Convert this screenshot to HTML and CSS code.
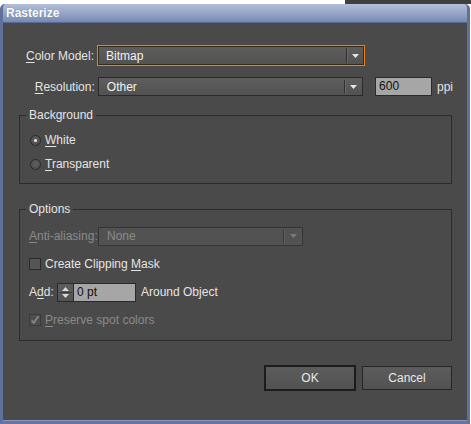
FILE: index.html
```html
<!DOCTYPE html>
<html>
<head>
<meta charset="utf-8">
<link rel="stylesheet" href="styles.css">
</head>
<body>
<div class="strip"><div class="strip-light"></div><div class="strip-dark"></div></div>
<div class="window">
  <div class="titlebar">Rasterize</div>
  <div class="content">
    <div class="row row-color">
      <span class="label"><u>C</u>olor Model:</span>
      <div class="select select-focus select-color">
        <span class="select-text">Bitmap</span>
        <span class="select-btn"><svg width="7" height="4" viewBox="0 0 7 4"><path d="M0 0h7L3.5 4z" fill="#e6e6e6"/></svg></span>
      </div>
    </div>
    <div class="row row-res">
      <span class="label label-res"><u>R</u>esolution:</span>
      <div class="select select-res">
        <span class="select-text">Other</span>
        <span class="select-btn"><svg width="7" height="4" viewBox="0 0 7 4"><path d="M0 0h7L3.5 4z" fill="#e6e6e6"/></svg></span>
      </div>
      <div class="field field-ppi">600</div>
      <span class="unit">ppi</span>
    </div>

    <fieldset class="group group-bg">
      <legend>Background</legend>
      <div class="group-body">
        <div class="opt"><span class="radio radio-on"></span><span><u>W</u>hite</span></div>
        <div class="opt"><span class="radio"></span><span><u>T</u>ransparent</span></div>
      </div>
    </fieldset>

    <fieldset class="group group-opt">
      <legend>Options</legend>
      <div class="group-body">
        <div class="opt2">
          <span class="label2 disabled"><u>A</u>nti-aliasing:</span>
          <div class="select select-dis">
            <span class="select-text">None</span>
            <span class="select-btn"><svg width="7" height="4" viewBox="0 0 7 4"><path d="M0 0h7L3.5 4z" fill="#7a7a7a"/></svg></span>
          </div>
        </div>
        <div class="opt2"><span class="check"></span><span>Create Clipping <u>M</u>ask</span></div>
        <div class="opt2">
          <span class="label3">A<u>d</u>d:</span>
          <span class="spinner">
            <svg width="7" height="4" viewBox="0 0 7 4"><path d="M0 4h7L3.5 0z" fill="#d8d8d8"/></svg>
            <span class="spin-sep"></span>
            <svg width="7" height="4" viewBox="0 0 7 4"><path d="M0 0h7L3.5 4z" fill="#d8d8d8"/></svg>
          </span>
          <div class="field field-pt">0 pt</div>
          <span class="unit2">Around Object</span>
        </div>
        <div class="opt2 disabled"><span class="check check-dis"><svg width="12" height="12" viewBox="0 0 12 12"><path d="M2 6.5l2.5 3L10 1.5" fill="none" stroke="#8a8a8a" stroke-width="2"/></svg></span><span><u>P</u>reserve spot colors</span></div>
      </div>
    </fieldset>

    <div class="buttons">
      <button class="btn btn-default">OK</button>
      <button class="btn">Cancel</button>
    </div>
  </div>
</div>
</body>
</html>
```
FILE: styles.css
```css
* { box-sizing: border-box; }
html, body { margin: 0; padding: 0; }
body {
  width: 471px;
  height: 424px;
  overflow: hidden;
  background: #ffffff;
  font-family: "Liberation Sans", Arial, sans-serif;
  font-size: 12px;
  color: #e4e4e4;
}
u { text-decoration: underline; text-underline-offset: 2px; }

.strip { display: flex; height: 4px; }
.strip-light { width: 345px; background: #ffffff; }
.strip-dark { flex: 1; background: #3f3f3f; }

.window {
  width: 470px;
  height: 420px;
  background: #4a4a4a;
  border-left: 3px solid #5f719b;
  border-right: 3px solid #5f719b;
  border-bottom: 3px solid #6577a1;
  border-radius: 5px 5px 0 0;
  display: flex;
  flex-direction: column;
  overflow: hidden;
  box-shadow: inset 0 -1px 0 #8797bb;
}
.titlebar {
  height: 19px;
  margin: 0 -3px;
  padding-left: 6px;
  background: linear-gradient(#b3bfd9, #96a6c8 50%, #7789b2);
  border-bottom: 1px solid #5a6b93;
  border-radius: 5px 5px 0 0;
  color: #ffffff;
  font-weight: bold;
  font-size: 12px;
  line-height: 19px;
  text-shadow: 0 0 1px #5a6b93;
}
.content {
  flex: 1;
  padding: 22px 14px 0 16px;
  display: flex;
  flex-direction: column;
}

.row { display: flex; align-items: center; }
.row-color { height: 21px; }
.row-res { height: 19px; margin-top: 11px; }
.label { width: 78px; text-align: right; padding-right: 3px; white-space: nowrap; }
.label-res { width: 79px; }

.select {
  display: flex;
  align-items: stretch;
  height: 100%;
  border: 1px solid #2a2a2a;
  background: linear-gradient(#5e5e5e, #525252);
}
.select-color { width: 268px; }
.select-res { width: 266px; }
.select-focus { border-color: #e8831c; box-shadow: inset 0 0 0 1px #3a2a14; }
.select-text { flex: 1; padding-left: 8px; display: flex; align-items: center; color: #f2f2f2; }
.select-btn {
  width: 18px;
  display: flex;
  align-items: center;
  justify-content: center;
  border-left: 1px solid #2e2e2e;
  box-shadow: inset 1px 0 0 #6c6c6c;
  margin: 2px 0;
}
.select-dis { width: 205px; height: 19px; background: #525252; border-color: #353535; }
.select-dis .select-text { color: #8a8a8a; }
.select-dis .select-btn { width: 19px; border-left-color: #3a3a3a; box-shadow: inset 1px 0 0 #5e5e5e; }

.field {
  height: 19px;
  background: #a6a6a6;
  border: 1px solid #2a2a2a;
  color: #111111;
  padding-left: 3px;
  line-height: 17px;
}
.field-ppi { width: 57px; margin-left: 12px; }
.unit { margin-left: 5px; }

.group {
  margin: 0;
  padding: 0;
  border: 1px solid #2c2c2c;
  min-width: 0;
  width: 433px;
}
.group legend {
  margin-left: 6px;
  padding: 0 3px;
  line-height: 14px;
  color: #e4e4e4;
}
.group-bg { margin-top: 12px; }
.group-bg .group-body { padding: 6px 0 7px 9px; }
.group-opt { margin-top: 18px; }
.group-opt .group-body { padding: 6px 0 6px 9px; }

.opt { height: 24px; display: flex; align-items: center; gap: 4px; }
.radio {
  width: 11px;
  height: 11px;
  border-radius: 50%;
  border: 1px solid #2a2a2a;
  background: radial-gradient(circle at 50% 40%, #5e5e5e, #4a4a4a);
  display: flex;
  align-items: center;
  justify-content: center;
  margin-left: 1px;
}
.radio-on::after {
  content: "";
  width: 3px;
  height: 3px;
  border-radius: 50%;
  background: #e8e8e8;
}

.opt2 { height: 28px; display: flex; align-items: center; }
.disabled { color: #8a8a8a; }
.label2 { width: 69px; white-space: nowrap; }
.label3 { width: 28px; }
.check {
  width: 12px;
  height: 12px;
  border: 1px solid #2a2a2a;
  background: #555555;
  margin-right: 4px;
  display: flex;
  align-items: center;
  justify-content: center;
}
.check-dis { background: #4e4e4e; border-color: #3a3a3a; }
.check-dis svg { margin-top: -1px; }

.spinner {
  width: 16px;
  height: 19px;
  border: 1px solid #2a2a2a;
  border-right: none;
  background: linear-gradient(#5e5e5e, #525252);
  display: flex;
  flex-direction: column;
  align-items: center;
  justify-content: center;
  gap: 1px;
}
.spin-sep { width: 12px; height: 1px; background: #3a3a3a; }
.field-pt { width: 63px; }
.unit2 { margin-left: 5px; }

.buttons {
  display: flex;
  justify-content: flex-end;
  align-items: center;
  gap: 6px;
  margin-top: 24px;
  width: 433px;
}
.btn {
  font-family: "Liberation Sans", Arial, sans-serif;
  font-size: 12px;
  color: #e8e8e8;
  width: 90px;
  height: 24px;
  border: 1px solid #262626;
  background: linear-gradient(#5c5c5c, #515151);
  padding: 0;
}
.btn-default { width: 92px; height: 26px; border: 2px solid #1c1c1c; }
```
